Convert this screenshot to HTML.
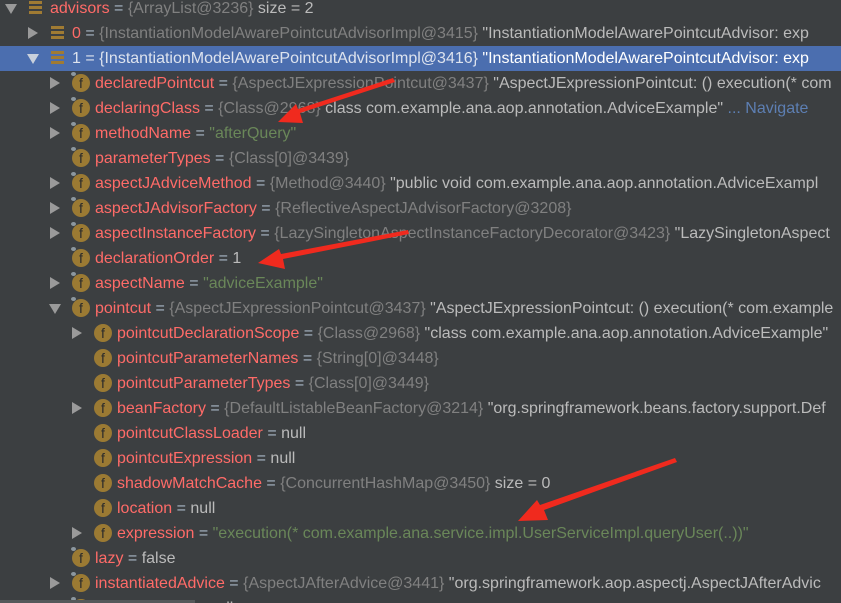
<!DOCTYPE html>
<html><head><meta charset="utf-8"><style>
html,body{margin:0;width:841px;height:603px;overflow:hidden}
body{background:#3c3f41;position:relative;font-family:"Liberation Sans","Noto Sans CJK SC",sans-serif;font-size:16px;}
.r{position:absolute;left:0;right:0;height:25px;line-height:25px;white-space:nowrap;}
.sel{background:#4b6eaf;}
.t{position:absolute;top:0;}
.n{color:#ff6b68}.e{color:#a9b7c6}.g{color:#808080}.w{color:#bbbbbb}.s{color:#6a8759}.nav{color:#5d7fb3}
.sel .g,.sel .e,.sel .n{color:#dde3ee}
.ar{position:absolute;top:8px;width:0;height:0;}
.ar.c{border-top:6px solid transparent;border-bottom:6px solid transparent;border-left:10px solid #9a9a9a;top:6px}
.ar.o{border-left:6px solid transparent;border-right:6px solid transparent;border-top:10px solid #9a9a9a;top:8px}
.f{position:absolute;top:3px;width:18px;height:18px;border-radius:50%;background:#9b7a33;color:#2b2b2b;font-size:14px;line-height:18px;text-align:center;font-family:"Liberation Sans",sans-serif;font-style:normal}
.f.p::before{content:"";position:absolute;left:-1px;top:-2px;width:5px;height:4px;border-radius:50%;background:#8c979f}
.l{position:absolute;top:5px;width:13px;height:14px;background:repeating-linear-gradient(#a07b33 0 3px,transparent 3px 5px)}
</style></head><body>
<div class="r" style="top:-4px"><i class="ar o" style="left:5px"></i><i class="l" style="left:29px"></i><span class="t" style="left:50px"><span class="n">advisors</span><span class="e"> = </span><span class="g">{ArrayList@3236}</span><span class="w">  size = 2</span></span></div>
<div class="r" style="top:21px"><i class="ar c" style="left:28px"></i><i class="l" style="left:51px"></i><span class="t" style="left:72px"><span class="n">0</span><span class="e"> = </span><span class="g">{InstantiationModelAwarePointcutAdvisorImpl@3415}</span><span class="w"> "InstantiationModelAwarePointcutAdvisor: exp</span></span></div>
<div class="r sel" style="top:46px"><i class="ar o" style="left:27px;border-top-color:#c8d0dc"></i><i class="l" style="left:51px"></i><span class="t" style="left:72px"><span class="n">1</span><span class="e"> = </span><span class="g">{InstantiationModelAwarePointcutAdvisorImpl@3416}</span><span class="w" style="color:#fff"> "InstantiationModelAwarePointcutAdvisor: exp</span></span></div>
<div class="r" style="top:71px"><i class="ar c" style="left:50px"></i><i class="f p" style="left:72px">f</i><span class="t" style="left:95px"><span class="n">declaredPointcut</span><span class="e"> = </span><span class="g">{AspectJExpressionPointcut@3437}</span><span class="w"> "AspectJExpressionPointcut: () execution(* com</span></span></div>
<div class="r" style="top:96px"><i class="ar c" style="left:50px"></i><i class="f p" style="left:72px">f</i><span class="t" style="left:95px"><span class="n">declaringClass</span><span class="e"> = </span><span class="g">{Class@2968}</span><span class="w"> class com.example.ana.aop.annotation.AdviceExample"</span><span class="nav"> ... Navigate</span></span></div>
<div class="r" style="top:121px"><i class="ar c" style="left:50px"></i><i class="f p" style="left:72px">f</i><span class="t" style="left:95px"><span class="n">methodName</span><span class="e"> = </span><span class="s">"afterQuery"</span></span></div>
<div class="r" style="top:146px"><i class="f p" style="left:72px">f</i><span class="t" style="left:95px"><span class="n">parameterTypes</span><span class="e"> = </span><span class="g">{Class[0]@3439}</span></span></div>
<div class="r" style="top:171px"><i class="ar c" style="left:50px"></i><i class="f p" style="left:72px">f</i><span class="t" style="left:95px"><span class="n">aspectJAdviceMethod</span><span class="e"> = </span><span class="g">{Method@3440}</span><span class="w"> "public void com.example.ana.aop.annotation.AdviceExampl</span></span></div>
<div class="r" style="top:196px"><i class="ar c" style="left:50px"></i><i class="f p" style="left:72px">f</i><span class="t" style="left:95px"><span class="n">aspectJAdvisorFactory</span><span class="e"> = </span><span class="g">{ReflectiveAspectJAdvisorFactory@3208}</span></span></div>
<div class="r" style="top:221px"><i class="ar c" style="left:50px"></i><i class="f p" style="left:72px">f</i><span class="t" style="left:95px"><span class="n">aspectInstanceFactory</span><span class="e"> = </span><span class="g">{LazySingletonAspectInstanceFactoryDecorator@3423}</span><span class="w"> "LazySingletonAspect</span></span></div>
<div class="r" style="top:246px"><i class="f p" style="left:72px">f</i><span class="t" style="left:95px"><span class="n">declarationOrder</span><span class="e"> = </span><span class="w">1</span></span></div>
<div class="r" style="top:271px"><i class="ar c" style="left:50px"></i><i class="f p" style="left:72px">f</i><span class="t" style="left:95px"><span class="n">aspectName</span><span class="e"> = </span><span class="s">"adviceExample"</span></span></div>
<div class="r" style="top:296px"><i class="ar o" style="left:49px"></i><i class="f p" style="left:72px">f</i><span class="t" style="left:95px"><span class="n">pointcut</span><span class="e"> = </span><span class="g">{AspectJExpressionPointcut@3437}</span><span class="w"> "AspectJExpressionPointcut: () execution(* com.example</span></span></div>
<div class="r" style="top:321px"><i class="ar c" style="left:72px"></i><i class="f" style="left:94px">f</i><span class="t" style="left:117px"><span class="n">pointcutDeclarationScope</span><span class="e"> = </span><span class="g">{Class@2968}</span><span class="w"> "class com.example.ana.aop.annotation.AdviceExample"</span></span></div>
<div class="r" style="top:346px"><i class="f" style="left:94px">f</i><span class="t" style="left:117px"><span class="n">pointcutParameterNames</span><span class="e"> = </span><span class="g">{String[0]@3448}</span></span></div>
<div class="r" style="top:371px"><i class="f" style="left:94px">f</i><span class="t" style="left:117px"><span class="n">pointcutParameterTypes</span><span class="e"> = </span><span class="g">{Class[0]@3449}</span></span></div>
<div class="r" style="top:396px"><i class="ar c" style="left:72px"></i><i class="f" style="left:94px">f</i><span class="t" style="left:117px"><span class="n">beanFactory</span><span class="e"> = </span><span class="g">{DefaultListableBeanFactory@3214}</span><span class="w"> "org.springframework.beans.factory.support.Def</span></span></div>
<div class="r" style="top:421px"><i class="f" style="left:94px">f</i><span class="t" style="left:117px"><span class="n">pointcutClassLoader</span><span class="e"> = </span><span class="w">null</span></span></div>
<div class="r" style="top:446px"><i class="f" style="left:94px">f</i><span class="t" style="left:117px"><span class="n">pointcutExpression</span><span class="e"> = </span><span class="w">null</span></span></div>
<div class="r" style="top:471px"><i class="f" style="left:94px">f</i><span class="t" style="left:117px"><span class="n">shadowMatchCache</span><span class="e"> = </span><span class="g">{ConcurrentHashMap@3450}</span><span class="w">  size = 0</span></span></div>
<div class="r" style="top:496px"><i class="f" style="left:94px">f</i><span class="t" style="left:117px"><span class="n">location</span><span class="e"> = </span><span class="w">null</span></span></div>
<div class="r" style="top:521px"><i class="ar c" style="left:72px"></i><i class="f" style="left:94px">f</i><span class="t" style="left:117px"><span class="n">expression</span><span class="e"> = </span><span class="s">"execution(* com.example.ana.service.impl.UserServiceImpl.queryUser(..))"</span></span></div>
<div class="r" style="top:546px"><i class="f p" style="left:72px">f</i><span class="t" style="left:95px"><span class="n">lazy</span><span class="e"> = </span><span class="w">false</span></span></div>
<div class="r" style="top:571px"><i class="ar c" style="left:50px"></i><i class="f p" style="left:72px">f</i><span class="t" style="left:95px"><span class="n">instantiatedAdvice</span><span class="e"> = </span><span class="g">{AspectJAfterAdvice@3441}</span><span class="w"> "org.springframework.aop.aspectj.AspectJAfterAdvic</span></span></div>
<div class="r" style="top:596px"><i class="f p" style="left:72px">f</i><span class="t" style="left:95px"><span class="n">hasReturning</span><span class="e"> = </span><span class="w">null</span></span></div>
<div style="position:absolute;left:0;top:600px;width:195px;height:3px;background:#55585a"></div>
<svg width="841" height="603" style="position:absolute;left:0;top:0">
<g fill="#f02a1e">
<polygon points="393,78 395,82 300,113 303,123 278,122 296,104 298,109"/>
<polygon points="408,230 409,234 283,259 285,269 258,263 279,249 281,254"/>
<polygon points="675,458 677,462 544,510 548,520 518,521 537,500 540,505"/>
</g></svg>
</body></html>
